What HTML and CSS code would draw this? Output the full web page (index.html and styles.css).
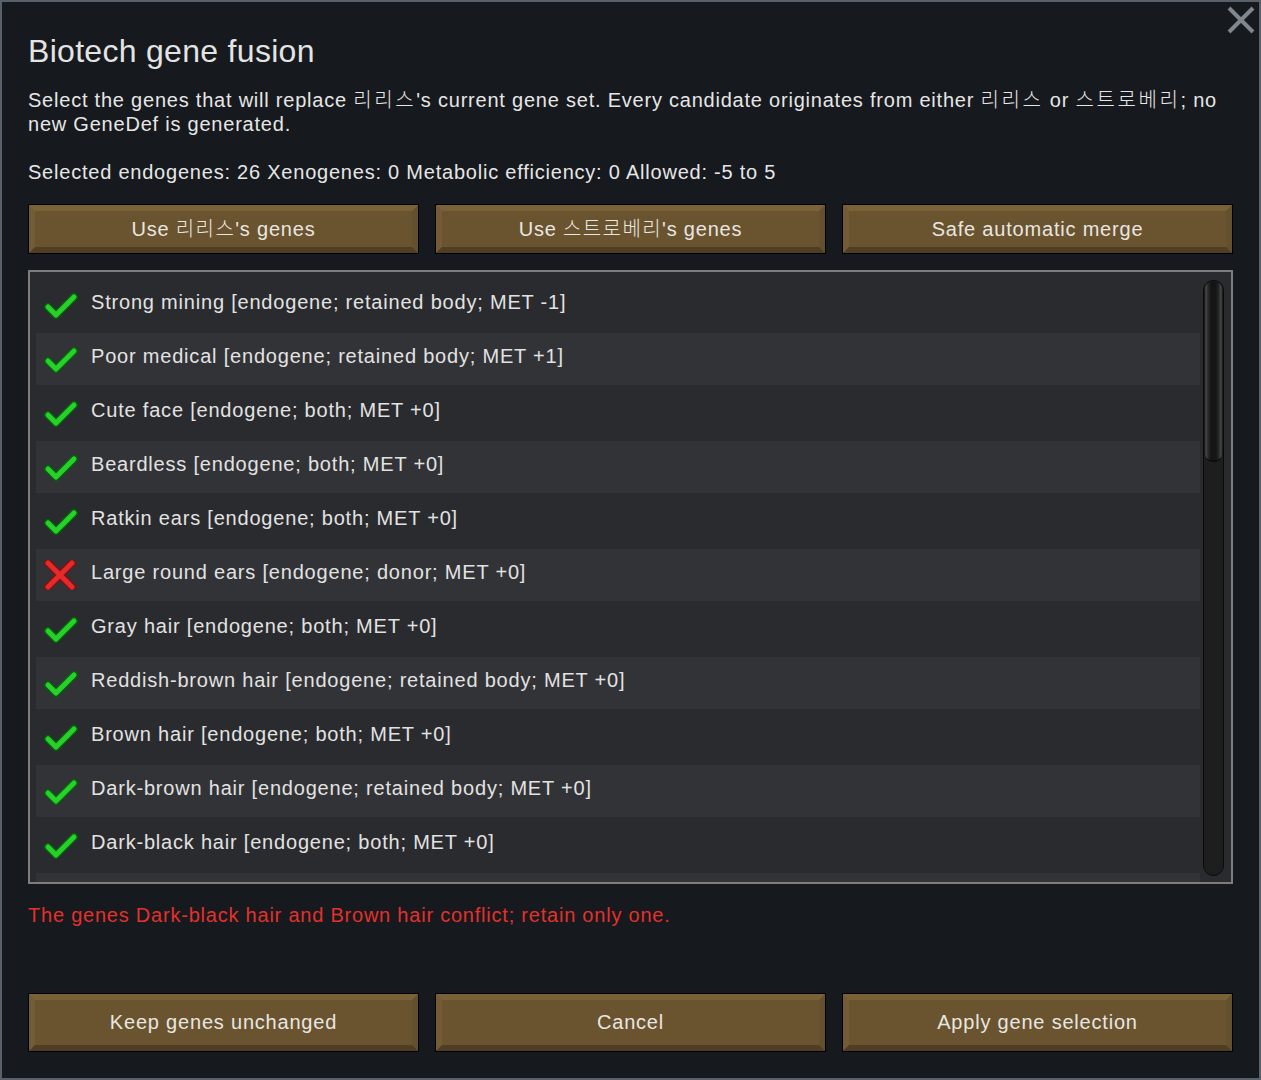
FILE: index.html
```html
<!DOCTYPE html>
<html>
<head>
<meta charset="utf-8">
<link rel="stylesheet" href="styles.css">
</head>
<body>
<div class="window">
  <svg class="close" width="28" height="28" viewBox="0 0 28 28"><path d="M2 2L26 26M26 2L2 26" stroke="#80868d" stroke-width="4" fill="none"/></svg>
  <h1 class="title">Biotech gene fusion</h1>
  <p class="desc">Select the genes that will replace <span class="ko">리리스</span>'s current gene set. Every candidate originates from either <span class="ko">리리스</span> or <span class="ko">스트로베리</span>; no new GeneDef is generated.</p>
  <p class="stats">Selected endogenes: 26 Xenogenes: 0 Metabolic efficiency: 0 Allowed: -5 to 5</p>
  <div class="btnrow top">
    <button class="btn">Use <span class="ko">리리스</span>'s genes</button>
    <button class="btn">Use <span class="ko">스트로베리</span>'s genes</button>
    <button class="btn">Safe automatic merge</button>
  </div>
  <div class="listbox">
    <div class="rows">
      <div class="row"><span class="icon"><svg width="36" height="30" viewBox="0 0 36 30"><path class="ck-o" d="M5 17L13 25L31 7"/><path class="ck" d="M5 17L13 25L31 7"/></svg></span><span class="label">Strong mining [endogene; retained body; MET -1]</span></div>
      <div class="row alt"><span class="icon"><svg width="36" height="30" viewBox="0 0 36 30"><path class="ck-o" d="M5 17L13 25L31 7"/><path class="ck" d="M5 17L13 25L31 7"/></svg></span><span class="label">Poor medical [endogene; retained body; MET +1]</span></div>
      <div class="row"><span class="icon"><svg width="36" height="30" viewBox="0 0 36 30"><path class="ck-o" d="M5 17L13 25L31 7"/><path class="ck" d="M5 17L13 25L31 7"/></svg></span><span class="label">Cute face [endogene; both; MET +0]</span></div>
      <div class="row alt"><span class="icon"><svg width="36" height="30" viewBox="0 0 36 30"><path class="ck-o" d="M5 17L13 25L31 7"/><path class="ck" d="M5 17L13 25L31 7"/></svg></span><span class="label">Beardless [endogene; both; MET +0]</span></div>
      <div class="row"><span class="icon"><svg width="36" height="30" viewBox="0 0 36 30"><path class="ck-o" d="M5 17L13 25L31 7"/><path class="ck" d="M5 17L13 25L31 7"/></svg></span><span class="label">Ratkin ears [endogene; both; MET +0]</span></div>
      <div class="row alt"><span class="icon"><svg width="36" height="30" viewBox="0 0 36 30"><path class="x-o" d="M5 3L29 27M29 3L5 27"/><path class="x" d="M5 3L29 27M29 3L5 27"/></svg></span><span class="label">Large round ears [endogene; donor; MET +0]</span></div>
      <div class="row"><span class="icon"><svg width="36" height="30" viewBox="0 0 36 30"><path class="ck-o" d="M5 17L13 25L31 7"/><path class="ck" d="M5 17L13 25L31 7"/></svg></span><span class="label">Gray hair [endogene; both; MET +0]</span></div>
      <div class="row alt"><span class="icon"><svg width="36" height="30" viewBox="0 0 36 30"><path class="ck-o" d="M5 17L13 25L31 7"/><path class="ck" d="M5 17L13 25L31 7"/></svg></span><span class="label">Reddish-brown hair [endogene; retained body; MET +0]</span></div>
      <div class="row"><span class="icon"><svg width="36" height="30" viewBox="0 0 36 30"><path class="ck-o" d="M5 17L13 25L31 7"/><path class="ck" d="M5 17L13 25L31 7"/></svg></span><span class="label">Brown hair [endogene; both; MET +0]</span></div>
      <div class="row alt"><span class="icon"><svg width="36" height="30" viewBox="0 0 36 30"><path class="ck-o" d="M5 17L13 25L31 7"/><path class="ck" d="M5 17L13 25L31 7"/></svg></span><span class="label">Dark-brown hair [endogene; retained body; MET +0]</span></div>
      <div class="row"><span class="icon"><svg width="36" height="30" viewBox="0 0 36 30"><path class="ck-o" d="M5 17L13 25L31 7"/><path class="ck" d="M5 17L13 25L31 7"/></svg></span><span class="label">Dark-black hair [endogene; both; MET +0]</span></div>
      <div class="row alt"><span class="icon"></span><span class="label"></span></div>
    </div>
    <div class="scrollbar"><div class="thumb"></div></div>
  </div>
  <p class="error">The genes Dark-black hair and Brown hair conflict; retain only one.</p>
  <div class="btnrow bottom">
    <button class="btn">Keep genes unchanged</button>
    <button class="btn">Cancel</button>
    <button class="btn">Apply gene selection</button>
  </div>
</div>
</body>
</html>
```
FILE: styles.css
```css
html, body {
  margin: 0;
  padding: 0;
  background: #16191d;
}
body {
  font-family: "Liberation Sans", "Noto Sans CJK KR", sans-serif;
  color: #e6e6e6;
}
.window {
  position: relative;
  width: 1261px;
  height: 1080px;
  box-sizing: border-box;
  border: 2px solid #58606a;
  background: #16191d;
  padding: 29px 26px 26px;
  display: flex;
  flex-direction: column;
}
.close {
  position: absolute;
  top: 4px;
  right: 4px;
}
.title {
  margin: 0;
  font-size: 32px;
  line-height: 40px;
  font-weight: normal;
  letter-spacing: 0.3px;
  color: #e4e4e4;
}
.desc, .stats, .error {
  margin: 0;
  font-size: 20px;
  line-height: 24px;
  letter-spacing: 0.78px;
}
.ko {
  letter-spacing: 2.6px;
  font-weight: 300;
}
.desc { margin-top: 17px; }
.stats { margin-top: 24px; }
.btnrow {
  display: grid;
  grid-template-columns: repeat(3, 1fr);
  gap: 18px;
  margin: 0 1px;
}
.btnrow.top { margin-top: 21px; }
.btnrow.bottom { margin-top: auto; margin-bottom: 1px; }
.btn {
  box-sizing: border-box;
  height: 48px;
  border: 6px solid;
  border-color: #7a6138 #62502f #4f3e24 #735b36;
  outline: 1px solid #000;
  background: #6a532f;
  color: #e8e6e0;
  font-family: "Liberation Sans", "Noto Sans CJK KR", sans-serif;
  font-size: 20px;
  line-height: 24px;
  letter-spacing: 0.8px;
  padding: 0 0 1px;
}
.btn .ko { letter-spacing: 1.4px; }
.btnrow.bottom .btn { height: 57px; }
.listbox {
  margin-top: 17px;
  height: 614px;
  box-sizing: border-box;
  border: 2px solid #7d7d7d;
  background: #2a2b2e;
  display: flex;
  flex-shrink: 0;
}
.rows {
  flex: 1;
  padding: 7px 0 0 6px;
  overflow: hidden;
  display: flex;
  flex-direction: column;
  gap: 2px;
}
.row {
  height: 52px;
  flex-shrink: 0;
  display: flex;
  align-items: center;
}
.row.alt { background: #323336; }
.icon {
  width: 36px;
  height: 30px;
  margin-left: 7px;
  display: flex;
}
.label {
  margin-left: 12px;
  font-size: 20px;
  line-height: 24px;
  letter-spacing: 0.8px;
  padding-bottom: 6px;
  color: #e2e2e2;
  white-space: nowrap;
}
.ck-o, .ck, .x-o, .x {
  fill: none;
  stroke-linecap: round;
  stroke-linejoin: round;
}
.ck-o { stroke: #0b5e10; stroke-width: 8; }
.ck { stroke: #27d12a; stroke-width: 5; }
.x-o { stroke: #7c1212; stroke-width: 8; }
.x { stroke: #e42a2a; stroke-width: 5; }
.scrollbar {
  width: 21px;
  margin: 8px 7px 6px 3px;
  box-sizing: border-box;
  border: 1px solid #090909;
  border-radius: 11px;
  background: #1d1e1d;
  overflow: hidden;
  flex-shrink: 0;
}
.thumb {
  height: 180px;
  border-radius: 10px;
  background: linear-gradient(to right, #0c0c0c 0, #484848 2px, #2a2a2a 4px, #151515 7px, #151515 12px, #2a2a2a 15px, #484848 17px, #0c0c0c 19px);
  border-bottom: 1px solid #050505;
}
.error {
  margin-top: 19px;
  color: #e3312c;
}
```
